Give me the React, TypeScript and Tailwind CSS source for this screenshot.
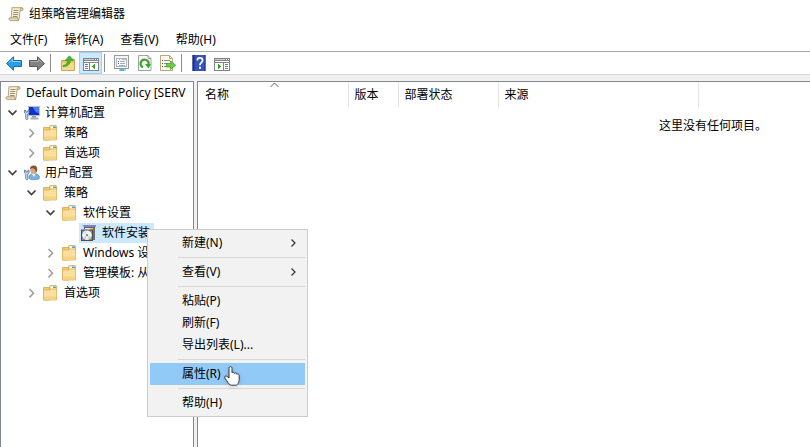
import { useState } from 'react';
import type { ReactNode } from 'react';

type TreeItem = {
  label: string;
  level: number;
  icon: ReactNode;
  state?: 'open' | 'closed';
  selected?: boolean;
};

function ScrollIcon() {
  return (
    <svg className="w-4 h-4 shrink-0" viewBox="0 0 16 16" fill="none" aria-hidden="true">
      <path d="M4 1.500h9.500c1 0 1.300.7 1.300 1.500s-.5 1.500-1.300 1.500H12L11 13.500H3z" fill="#f8efd2" stroke="#9d9274" strokeWidth=".8" />
      <path d="M3.800 1.100h9.400v1.200H3.800z" fill="#c9b684" />
      <path d="M2 11.800h8c-.6 1 0 2.800 1 2.800H2.500C.6 14.600.4 11.800 2 11.800z" fill="#eadbb0" stroke="#9d9274" strokeWidth=".8" />
      <path d="M12.300 3.200c0-1.800 2.700-1.800 2.700 0 0 1-.8 1.400-1.400 1.400h-1.300z" fill="#e3cd95" stroke="#9d9274" strokeWidth=".7" />
      <path d="M5.500 4.500h5M5.300 6.500h5M5.100 8.500h5M4.900 10.500h4.500" stroke="#8b8472" strokeWidth=".9" />
    </svg>
  );
}

function FolderIcon() {
  return (
    <svg className="w-4 h-4 shrink-0" viewBox="0 0 16 16" fill="none" aria-hidden="true">
      <path d="M.500 2.500h6V15h-6z" fill="#efca76" stroke="#d3a651" strokeWidth=".8" />
      <path d="M6.500 1.300c0-.4.300-.8.800-.8h5.400c.500 0 .8.400.8.800V5h-7z" fill="#f7dd97" stroke="#d3a651" strokeWidth=".8" />
      <path d="M8 1.500h5v2H8z" fill="#fff" />
      <path d="M10 1.500h3v1.500h-3z" fill="#4ba2e6" />
      <path d="M.500 5h6l1.200-1h5.800v11H.500z" fill="#fae09b" stroke="#dcb25c" strokeWidth=".8" />
      <path d="M1 11.500h12v3H1z" fill="#f4d384" />
    </svg>
  );
}

function ToolsFigure() {
  return (
    <path
      d="M.600 5v3l1.200 1v4.700c0 1.300 2 1.300 2 0V9L5 8V5l-1.300.7v1.400H2V5.700z"
      fill="#d7e6f4"
      stroke="#55789e"
      strokeWidth=".9"
    />
  );
}

function ComputerIcon() {
  return (
    <svg className="w-4 h-4 shrink-0" viewBox="0 0 16 16" fill="none" aria-hidden="true">
      <path d="M4 1h12v10H4z" fill="#b9c0ca" />
      <path d="M5 2h10v8H5z" fill="#1230c8" />
      <path d="M9 2h6v6c-3 0-5-2.500-6-6z" fill="#4b7bf0" />
      <path d="M8 11h4v1.500H8z" fill="#8b939e" />
      <path d="M6.500 12.500h8V14.500h-8z" fill="#a4acb7" />
      <ToolsFigure />
    </svg>
  );
}

function UserIcon() {
  return (
    <svg className="w-4 h-4 shrink-0" viewBox="0 0 16 16" fill="none" aria-hidden="true">
      <path d="M5 13c0-3 1.500-4.500 5-4.500s5.500 2 5.500 4.300c0 2.500-10.500 2.500-10.500.2z" fill="#7fb2e3" stroke="#4d7fae" strokeWidth=".7" />
      <path d="m7.800 8.600 2.200 3.200 1.800-3.200z" fill="#fff" />
      <ellipse cx="9.300" cy="5.200" rx="3" ry="3.500" fill="#dba678" />
      <path d="M6 4.500C5.800 2 7.300.500 9.500.500c2.700 0 4.200 2 3.700 4.700-.2 1.300-.8 2.300-1.500 2.800.3-2.300-.4-3.700-2.200-4.500C8.300 3 7 3.400 6 4.500z" fill="#80573a" />
      <ToolsFigure />
    </svg>
  );
}

function InstallIcon() {
  return (
    <svg className="w-4 h-4 shrink-0" viewBox="0 0 16 16" fill="none" aria-hidden="true">
      <path d="M1.500 0h13.500v1.500L13 3H3.500z" fill="#8683bd" />
      <path d="M3 2h11v2H3z" fill="#5d5c88" />
      <path d="M4 3h5v3H4z" fill="#e9eaf0" />
      <path d="M9 3h4v6H9z" fill="#f7c232" />
      <path d="M12 3h2v12h-2z" fill="#6f7077" />
      <path d="M0 4.500h12V16H0z" fill="#4c4d52" />
      <path d="M1 5.500h10V15H1z" fill="#85878c" />
      <circle cx="6" cy="10.200" r="4.800" fill="#f4f4f4" />
      <path d="M6 10.200 1.800 8A4.800 4.800 0 0 1 5 5.500z" fill="#d4e7f7" />
      <path d="m6 10.200 4.500 1.600a4.800 4.800 0 0 1-3 3z" fill="#bfe3bd" />
      <path d="m6 10.200-4 2.500a4.800 4.800 0 0 0 2.500 2z" fill="#efc5d2" />
      <circle cx="6" cy="10.200" r="1.100" fill="#888" />
    </svg>
  );
}

function ArrowIcon({ forward = false }: { forward?: boolean }) {
  return forward ? (
    <svg className="w-4 h-4" viewBox="0 0 16 16" aria-hidden="true">
      <path d="M8.500 1.800 15.500 8.500 8.500 15.200v-3.700H.500v-6h8z" fill="#828282" stroke="#585858" strokeLinejoin="round" />
      <path d="M1.500 6.500h8V4.300L12.700 7.500" fill="none" stroke="#adadad" />
    </svg>
  ) : (
    <svg className="w-4 h-4" viewBox="0 0 16 16" aria-hidden="true">
      <path d="M7.500 1.800.500 8.500l7 6.700v-3.700h8v-6h-8z" fill="#2a9fe8" stroke="#1b6cad" strokeLinejoin="round" />
      <path d="M14.500 6.500h-8V4.300L2.800 7.800" fill="none" stroke="#86d4fb" />
    </svg>
  );
}

function UpFolderIcon() {
  return (
    <svg className="w-4 h-4" viewBox="0 0 16 16" aria-hidden="true">
      <path d="M1.500 5.500h5L8 4h5.500c.6 0 1 .4 1 1v10.500h-13z" fill="#edc468" stroke="#cda04a" strokeWidth=".9" />
      <path d="M2 8h12v7H2z" fill="#f8da8e" />
      <path d="M3 10.500c3-.5 4.300-2 4.500-5H5L9.500.800 13.500 5.500h-3C10.300 9 7.500 11.700 3 11.700z" fill="#49b82f" stroke="#2f8f1d" strokeWidth=".6" />
    </svg>
  );
}

function PaneIcon({ right = false }: { right?: boolean }) {
  return (
    <svg className="w-4 h-4" viewBox="0 0 16 16" shapeRendering="crispEdges" aria-hidden="true">
      <path d="M0 3h16v13H0z" fill="#808489" />
      <path d="M1 6h14v1H1z" fill="#fff" />
      <path d="M1 4h10v1H1z" fill="#c9ccd0" />
      <path d="M12 4h1v1h-1zM14 4h1v1h-1z" fill="#fff" />
      {right ? (
        <>
          <path d="M1 8h8v7H1zM10 8h5v7h-5z" fill="#fff" />
          <path d="M11 9h3v1h-3zM11 11h3v1h-3zM11 13h3v1h-3z" fill="#5d7fa8" />
          <path d="M4 9h1v1h1v1h1v1H6v1H5v1H4z" fill="#36a526" />
        </>
      ) : (
        <>
          <path d="M1 8h5v7H1zM7 8h8v7H7z" fill="#fff" />
          <path d="M2 9h3v1H2zM2 11h3v1H2zM2 13h3v1H2z" fill="#5d7fa8" />
          <path d="M12 9h-1v1h-1v1H9v1h1v1h1v1h1z" fill="#36a526" />
        </>
      )}
    </svg>
  );
}

function PropertiesIcon() {
  return (
    <svg className="w-4 h-4" viewBox="0 0 16 16" shapeRendering="crispEdges" aria-hidden="true">
      <path d="M0 0h15v14H0z" fill="#979ba0" />
      <path d="M1 1h13v12H1z" fill="#f4f5f7" />
      <path d="M2 3h11v9H2z" fill="#aeb5bd" />
      <path d="M3 5h9v6H3z" fill="#fff" />
      <path d="M3 4h2v1H3zM6 4h2v1H6z" fill="#fff" />
      <path d="M4 6h1v1H4zM4 8h1v1H4z" fill="#2f6fb3" />
      <path d="M6 6h5v1H6zM6 8h5v1H6zM5 10h6v1H5z" fill="#a3acb7" />
      <path d="M5 14h7v2H5z" fill="#9ad9ee" />
      <path d="M6 14h4v2H6z" fill="#4cbadd" />
    </svg>
  );
}

function RefreshIcon() {
  return (
    <svg className="w-4 h-4" viewBox="0 0 16 16" fill="none" aria-hidden="true">
      <path d="M1.500.500h9.500l3 3v12H1.500z" fill="#fbfbfb" stroke="#a2a2a2" />
      <path d="M11 .500v3h3" stroke="#a2a2a2" />
      <path d="M6 12.300A4 4 0 1 1 11.600 9" stroke="#37a62e" strokeWidth="2.200" />
      <path d="M8 9h6l-2.500 4.500z" fill="#37a62e" />
    </svg>
  );
}

function ExportIcon() {
  return (
    <svg className="w-4 h-4" viewBox="0 0 16 16" fill="none" aria-hidden="true">
      <path d="M.500.500h9l3 3v12H.500z" fill="#fdf9e6" stroke="#b3a987" />
      <path d="M9.500.500v3h3" stroke="#b3a987" />
      <path d="M2 5.500h1M2 8.500h1M2 11.500h1" stroke="#4a4a4a" />
      <path d="M4 5.500h6M4 8.500h4M4 11.500h4" stroke="#8a8a9a" />
      <path d="M6.500 8.500h4V6l5.200 4.200-5.200 4.300V12h-4z" fill="#6bcf3f" stroke="#3c9a22" strokeWidth=".7" />
    </svg>
  );
}

function HelpIcon() {
  return (
    <svg className="w-4 h-4" viewBox="0 0 16 16" fill="none" aria-hidden="true">
      <path d="M1.500 0h13v16h-13z" fill="#3453bd" />
      <path d="M1.500 0h2v16h-2z" fill="#1c2f80" />
      <path d="M14 0v16" stroke="#22388f" />
      <path d="M6.300 5.500c0-3.500 5.300-3.300 5.300-.2 0 2.200-2.700 2.400-2.700 4.900" stroke="#fff" strokeWidth="1.700" />
      <path d="M8 11.700h2v2H8z" fill="#fff" />
    </svg>
  );
}

function Chevron({ open }: { open: boolean }) {
  return open ? (
    <svg className="w-4 h-4" viewBox="0 0 16 16" fill="none" aria-hidden="true">
      <path d="m4.500 5.500 4 4 4-4" stroke="#404040" strokeWidth="1.700" />
    </svg>
  ) : (
    <svg className="w-4 h-4" viewBox="0 0 16 16" fill="none" aria-hidden="true">
      <path d="m6.500 4 4 4.200-4 4.200" stroke="#a0a0a0" strokeWidth="1.600" />
    </svg>
  );
}

function HandCursor() {
  return (
    <svg className="absolute left-[74px] top-[3px] w-4 h-5 pointer-events-none drop-shadow-sm" viewBox="0 0 16 20" aria-hidden="true">
      <path
        d="M5 12V2.300C5 0 8 0 8 2.300v4.500c.6-.8 2.300-.6 2.500.5.700-.6 2.200-.3 2.300.8 1-.4 2.400.1 2.400 1.500v3.600c0 3.200-1.700 6-3.300 6H7.200c-1.600 0-3-2.200-4.300-4.300L.900 12.100c-.9-1.600.9-2.900 2.200-1.700z"
        fill="#fff"
        stroke="#333"
        strokeLinejoin="round"
      />
    </svg>
  );
}

const MENUS = ['文件(F)', '操作(A)', '查看(V)', '帮助(H)'];

const TREE: TreeItem[] = [
  { label: '计算机配置', level: 0, icon: <ComputerIcon />, state: 'open' },
  { label: '策略', level: 1, icon: <FolderIcon />, state: 'closed' },
  { label: '首选项', level: 1, icon: <FolderIcon />, state: 'closed' },
  { label: '用户配置', level: 0, icon: <UserIcon />, state: 'open' },
  { label: '策略', level: 1, icon: <FolderIcon />, state: 'open' },
  { label: '软件设置', level: 2, icon: <FolderIcon />, state: 'open' },
  { label: '软件安装', level: 3, icon: <InstallIcon />, selected: true },
  { label: 'Windows 设', level: 2, icon: <FolderIcon />, state: 'closed' },
  { label: '管理模板: 从', level: 2, icon: <FolderIcon />, state: 'closed' },
  { label: '首选项', level: 1, icon: <FolderIcon />, state: 'closed' },
];

const INDENTS = ['pl-[3px]', 'pl-[22px]', 'pl-[41px]', 'pl-[60px]'];

const CONTEXT_GROUPS = [
  [{ label: '新建(N)', submenu: true }],
  [{ label: '查看(V)', submenu: true }],
  [{ label: '粘贴(P)' }, { label: '刷新(F)' }, { label: '导出列表(L)...' }],
  [{ label: '属性(R)' }],
  [{ label: '帮助(H)' }],
] as { label: string; submenu?: boolean }[][];

const TOOLS = [
  [
    { name: '后退', icon: <ArrowIcon /> },
    { name: '前进', icon: <ArrowIcon forward /> },
  ],
  [
    { name: '向上一级', icon: <UpFolderIcon /> },
    { name: '显示/隐藏控制台树', icon: <PaneIcon />, pressed: true },
  ],
  [
    { name: '属性', icon: <PropertiesIcon /> },
    { name: '刷新', icon: <RefreshIcon /> },
    { name: '导出列表', icon: <ExportIcon /> },
  ],
  [
    { name: '帮助', icon: <HelpIcon /> },
    { name: '显示/隐藏操作窗格', icon: <PaneIcon right /> },
  ],
] as { name: string; icon: ReactNode; pressed?: boolean }[][];

function ContextMenu() {
  const [active, setActive] = useState('属性(R)');

  return (
    <div
      role="menu"
      className="absolute left-[147px] top-[229px] w-[161px] p-0.5 bg-[#f2f2f2] border border-[#cccccc]"
    >
      {CONTEXT_GROUPS.map((group, index) => (
        <div key={index}>
          {index > 0 && <div className="h-px my-[3px] ml-7 bg-[#d7d7d7]" />}
          {group.map((item) => (
            <button
              key={item.label}
              role="menuitem"
              onMouseEnter={() => setActive(item.label)}
              className={`relative flex items-center justify-between w-full h-[22px] pl-8 pr-1 ${
                active === item.label ? 'bg-[#91c9f7]' : ''
              }`}
            >
              {item.label}
              {item.submenu && (
                <svg className="w-4 h-4" viewBox="0 0 16 16" fill="none" aria-hidden="true">
                  <path d="m6.500 4.500 3.500 3.500-3.500 3.500" stroke="#333" strokeWidth="1.200" />
                </svg>
              )}
              {item.label === '属性(R)' && <HandCursor />}
            </button>
          ))}
        </div>
      ))}
    </div>
  );
}

export default function App() {
  return (
    <div className="relative flex flex-col h-screen overflow-hidden bg-white text-black text-xs leading-5 whitespace-nowrap font-['Noto_Sans','Noto_Sans_CJK_SC',sans-serif]">
      <header className="flex items-center gap-[5px] h-[27px] px-2">
        <ScrollIcon />
        <h1>组策略管理编辑器</h1>
      </header>

      <nav className="flex items-center gap-[17px] h-6 px-2.5 pt-0.5">
        {MENUS.map((menu) => (
          <button key={menu}>{menu}</button>
        ))}
      </nav>

      <div role="toolbar" className="flex items-center h-6 pl-0.5 border-y border-t-[#a9a9a9] border-b-[#d9d9d9]">
        {TOOLS.map((group, index) => (
          <div key={index} className="flex items-center">
            {index > 0 && <div className="w-px h-[18px] ml-0.5 mr-[5px] bg-[#8c8c8c]" />}
            {group.map((tool) => (
              <button
                key={tool.name}
                aria-label={tool.name}
                className={`flex items-center justify-center w-[23px] h-[22px] border ${
                  tool.pressed ? 'bg-[#cce8ff] border-[#99d1ff]' : 'border-transparent'
                }`}
              >
                {tool.icon}
              </button>
            ))}
          </div>
        ))}
      </div>

      <main className="flex flex-1 min-h-0 gap-[3px] pt-1.5 bg-[#f0f0f0]">
        <ul role="tree" className="w-[194px] shrink-0 overflow-hidden pt-px bg-white border border-b-0 border-[#828790]">
          <li role="treeitem" className="flex items-center gap-[5px] h-5 pl-1">
            <ScrollIcon />
            Default Domain Policy [SERV
          </li>
          {TREE.map((item, index) => (
            <li
              key={index}
              role="treeitem"
              aria-selected={!!item.selected}
              className={`flex items-center gap-0.5 h-5 ${INDENTS[item.level]}`}
            >
              <span className="w-4 shrink-0">
                {item.state && <Chevron open={item.state === 'open'} />}
              </span>
              <span
                className={`flex items-center gap-[5px] h-5 pl-0.5 pr-1 ${
                  item.selected ? 'bg-[#cce8ff]' : ''
                }`}
              >
                {item.icon}
                {item.label}
              </span>
            </li>
          ))}
        </ul>

        <section className="flex-1 min-w-0 overflow-hidden bg-white border-t border-l border-[#828790]">
          <table className="table-fixed w-full">
            <thead>
              <tr className="h-[25px] text-left">
                <th className="relative w-[150px] pl-[7px] font-normal border-r border-[#e5e5e5]">
                  <svg className="absolute left-[72px] top-0 w-[9px] h-[6px]" viewBox="0 0 9 6" fill="none" aria-hidden="true">
                    <path d="m.500 5 4-4 4 4" stroke="#606060" />
                  </svg>
                  名称
                </th>
                <th className="w-[50px] pl-1.5 font-normal border-r border-[#e5e5e5]">版本</th>
                <th className="w-[100px] pl-1.5 font-normal border-r border-[#e5e5e5]">部署状态</th>
                <th className="w-[200px] pl-1.5 font-normal border-r border-[#e5e5e5]">来源</th>
                <td />
              </tr>
            </thead>
          </table>
          <p className="pt-[9px] pl-[461px]">这里没有任何项目。</p>
        </section>
      </main>

      <ContextMenu />
    </div>
  );
}
